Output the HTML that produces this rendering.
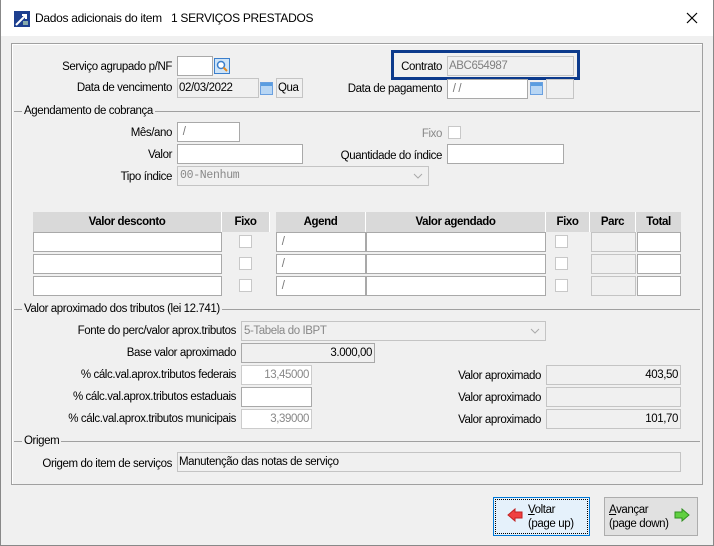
<!DOCTYPE html>
<html><head><meta charset="utf-8"><style>
*{box-sizing:border-box;margin:0;padding:0}
body{width:714px;height:546px;background:#f0f0f0;font-family:"Liberation Sans",sans-serif;font-size:11.5px;color:#000;position:relative;overflow:hidden;letter-spacing:-0.4px}
.a{position:absolute}
.t{position:absolute;white-space:nowrap;line-height:14px}
.r{text-align:right}
.in{position:absolute;background:#fff;border:1px solid #a9a9a9;height:20px;line-height:18px;padding:0 2px;white-space:nowrap}
.g{background:#f0f0f0;border-color:#c4c4c4}
.cb{position:absolute;width:13px;height:13px;border:1px solid #c8c8c8;background:#fff}
.sec{position:absolute;left:14px;width:686px;height:1px;background:#a0a0a0}
.sect{position:absolute;left:22px;background:#f0f0f0;padding:0 2px;line-height:14px;white-space:nowrap}
.th{position:absolute;top:212px;height:20px;background:#d9d9d9;font-weight:bold;text-align:center;line-height:20px;border-right:1px solid #fff}
.cal{position:absolute;width:13px;height:13px;background:linear-gradient(#5a9de0 0 3px,#b8d6f4 3px);border:1px solid #6aa0e0}
</style></head><body>
<div class="a" style="left:0;top:0;width:714px;height:36px;background:#fff"></div>
<div class="a" style="left:0;top:0;width:1px;height:546px;background:#888"></div>
<div class="a" style="left:713px;top:0;width:1px;height:546px;background:#888"></div>
<div class="a" style="left:0;top:545px;width:714px;height:1px;background:#888"></div>
<svg class="a" style="left:14px;top:11px" width="16" height="16"><rect width="16" height="16" fill="#1d3f8f"/><path d="M2 14 L12 4 M8 4 H12 V8" stroke="#fff" stroke-width="2" fill="none"/><rect x="9" y="10" width="5" height="4" fill="#8aa"/></svg>
<div class="t" style="left:35px;top:11px;font-size:12px;letter-spacing:-0.3px">Dados adicionais do item&nbsp;&nbsp; 1 SERVIÇOS PRESTADOS</div>
<svg class="a" style="left:686px;top:12px" width="12" height="12"><path d="M1 1L11 11M11 1L1 11" stroke="#000" stroke-width="1.2"/></svg>

<div class="a" style="left:11px;top:43px;width:692px;height:442px;border:1px solid #a0a0a0;box-shadow:inset 1px 1px 0 #fff"></div>

<div class="t r" style="left:0;width:172px;top:60px">Serviço agrupado p/NF</div>
<div class="in" style="left:177px;top:56px;width:36px"></div>
<svg class="a" style="left:214px;top:58px" width="16" height="16"><rect x="0.5" y="0.5" width="15" height="15" fill="#cfe4f7" stroke="#3b7fcc"/><circle cx="7" cy="7" r="3.5" fill="#fff" stroke="#3b7fcc" stroke-width="1.5"/><path d="M9.5 9.5L13 13" stroke="#e38a20" stroke-width="2"/></svg>
<div class="t r" style="left:0;width:172px;top:81px">Data de vencimento</div>
<div class="in g" style="left:177px;top:78px;width:82px;padding:0 1px">02/03/2022</div>
<div class="cal" style="left:260px;top:82px"></div>
<div class="in g" style="left:276px;top:78px;width:27px;padding:0 1px">Qua</div>

<div class="a" style="left:391px;top:50px;width:189px;height:30px;border:3px solid #0c3a8c"></div>
<div class="t r" style="left:340px;width:102px;top:60px">Contrato</div>
<div class="in g" style="left:447px;top:56px;width:127px;color:#808080;padding:0 1px">ABC654987</div>
<div class="t r" style="left:300px;width:142px;top:82px">Data de pagamento</div>
<div class="in" style="left:447px;top:79px;width:81px;color:#777">&nbsp;/ /</div>
<div class="cal" style="left:530px;top:82px"></div>
<div class="in g" style="left:546px;top:79px;width:28px"></div>

<div class="sec" style="top:111px"></div>
<div class="sect" style="top:104px">Agendamento de cobrança</div>
<div class="t r" style="left:0;width:172px;top:126px">Mês/ano</div>
<div class="in" style="left:177px;top:122px;width:63px;color:#777">&nbsp;/</div>
<div class="t r" style="left:0;width:172px;top:148px">Valor</div>
<div class="in" style="left:177px;top:144px;width:126px"></div>
<div class="t r" style="left:340px;width:102px;top:127px;color:#888">Fixo</div>
<div class="cb" style="left:448px;top:126px"></div>
<div class="t r" style="left:300px;width:142px;top:149px">Quantidade do índice</div>
<div class="in" style="left:447px;top:144px;width:117px"></div>
<div class="t r" style="left:0;width:172px;top:170px">Tipo índice</div>
<div class="in g" style="left:177px;top:166px;width:252px;color:#888;font-family:'Liberation Mono',monospace;letter-spacing:-0.3px">00-Nenhum</div>
<svg class="a" style="left:413px;top:172px" width="10" height="8"><path d="M1 2L5 6L9 2" stroke="#aaa" fill="none"/></svg>

<div class="th" style="left:33px;width:189px">Valor desconto</div>
<div class="th" style="left:222px;width:48px">Fixo</div>
<div class="th" style="left:270px;width:6px;background:#f0f0f0;border:0"></div>
<div class="th" style="left:276px;width:90px">Agend</div>
<div class="th" style="left:366px;width:180px">Valor agendado</div>
<div class="th" style="left:546px;width:44px">Fixo</div>
<div class="th" style="left:590px;width:46px">Parc</div>
<div class="th" style="left:636px;width:45px;border:0">Total</div>

<div class="in" style="left:33px;top:232px;width:189px"></div><div class="cb" style="left:239px;top:235px"></div><div class="in" style="left:276px;top:232px;width:90px;color:#777">&nbsp;/</div><div class="in" style="left:366px;top:232px;width:180px"></div><div class="cb" style="left:555px;top:235px"></div><div class="in g" style="left:591px;top:232px;width:45px"></div><div class="in" style="left:637px;top:232px;width:44px"></div>
<div class="in" style="left:33px;top:254px;width:189px"></div><div class="cb" style="left:239px;top:257px"></div><div class="in" style="left:276px;top:254px;width:90px;color:#777">&nbsp;/</div><div class="in" style="left:366px;top:254px;width:180px"></div><div class="cb" style="left:555px;top:257px"></div><div class="in g" style="left:591px;top:254px;width:45px"></div><div class="in" style="left:637px;top:254px;width:44px"></div>
<div class="in" style="left:33px;top:276px;width:189px"></div><div class="cb" style="left:239px;top:279px"></div><div class="in" style="left:276px;top:276px;width:90px;color:#777">&nbsp;/</div><div class="in" style="left:366px;top:276px;width:180px"></div><div class="cb" style="left:555px;top:279px"></div><div class="in g" style="left:591px;top:276px;width:45px"></div><div class="in" style="left:637px;top:276px;width:44px"></div>

<div class="sec" style="top:309px"></div>
<div class="sect" style="top:302px">Valor aproximado dos tributos (lei 12.741)</div>
<div class="t r" style="left:0;width:236px;top:324px">Fonte do perc/valor aprox.tributos</div>
<div class="in g" style="left:241px;top:321px;width:305px;color:#888">5-Tabela do IBPT</div>
<svg class="a" style="left:530px;top:327px" width="10" height="8"><path d="M1 2L5 6L9 2" stroke="#aaa" fill="none"/></svg>
<div class="t r" style="left:0;width:236px;top:346px">Base valor aproximado</div>
<div class="in g r" style="left:241px;top:343px;width:134px;border-color:#a9a9a9">3.000,00</div>
<div class="t r" style="left:0;width:236px;top:368px">% cálc.val.aprox.tributos federais</div>
<div class="in r" style="left:241px;top:365px;width:71px;color:#888;border-color:#ccc">13,45000</div>
<div class="t r" style="left:0;width:236px;top:390px">% cálc.val.aprox.tributos estaduais</div>
<div class="in" style="left:241px;top:387px;width:71px"></div>
<div class="t r" style="left:0;width:236px;top:412px">% cálc.val.aprox.tributos municipais</div>
<div class="in r" style="left:241px;top:409px;width:71px;color:#888;border-color:#ccc">3,39000</div>
<div class="t r" style="left:400px;width:141px;top:369px">Valor aproximado</div>
<div class="in g r" style="left:546px;top:365px;width:135px">403,50</div>
<div class="t r" style="left:400px;width:141px;top:391px">Valor aproximado</div>
<div class="in g" style="left:546px;top:387px;width:135px"></div>
<div class="t r" style="left:400px;width:141px;top:413px">Valor aproximado</div>
<div class="in g r" style="left:546px;top:409px;width:135px">101,70</div>

<div class="sec" style="top:441px"></div>
<div class="sect" style="top:434px">Origem</div>
<div class="t r" style="left:0;width:172px;top:457px">Origem do item de serviços</div>
<div class="in g" style="left:177px;top:452px;width:504px;padding:0 1px">Manutenção das notas de serviço</div>

<div class="a" style="left:493px;top:497px;width:97px;height:39px;background:#e5f1fb;border:1px solid #0078d7"><div class="a" style="left:1px;top:1px;right:1px;bottom:1px;border:1px dotted #000"></div></div>
<svg class="a" style="left:507px;top:508px" width="16" height="14"><path d="M1 7L8 1V4H15V10H8V13Z" fill="#f04040" stroke="#c02020"/></svg>
<div class="t" style="left:528px;top:503px;line-height:14px"><u>V</u>oltar<br>(page up)</div>
<div class="a" style="left:604px;top:497px;width:94px;height:39px;background:#e1e1e1;border:1px solid #adadad"></div>
<div class="t" style="left:609px;top:503px;line-height:14px"><u>A</u>vançar<br>(page down)</div>
<svg class="a" style="left:674px;top:508px" width="16" height="14"><path d="M15 7L8 1V4H1V10H8V13Z" fill="#60d040" stroke="#309020"/></svg>
</body></html>
